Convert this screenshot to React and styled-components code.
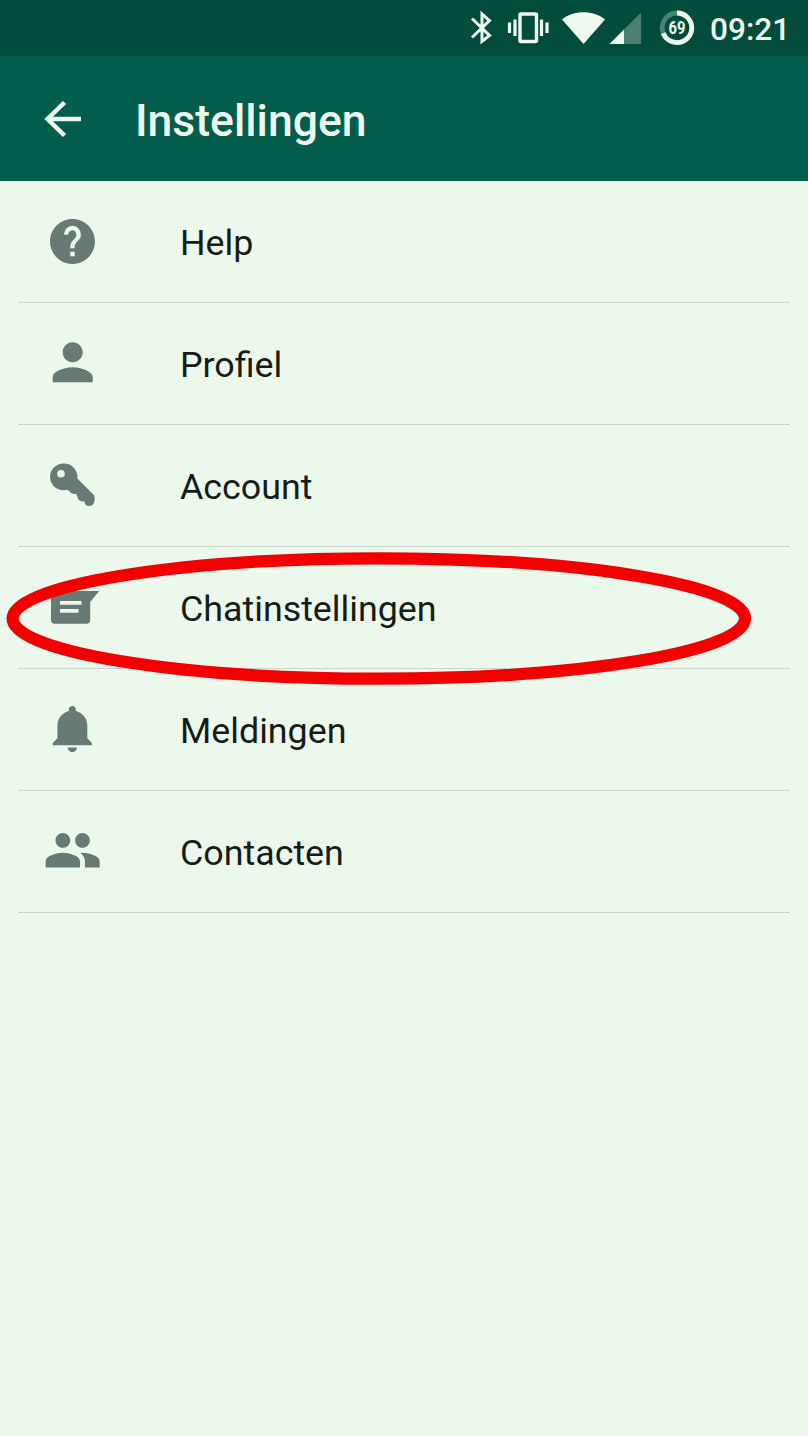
import styled, { createGlobalStyle } from "styled-components";

const GlobalStyle = createGlobalStyle`
  body{
    margin:0;
    background:#edf8ed;
    font-family:Roboto, "Noto Sans", sans-serif;
  }
`

const Screen = styled.div`
  display:flex;
  flex-direction:column;
  min-height:1436px;
  background:#edf8ed;
`

const StatusBar = styled.div`
  display:flex;
  align-items:flex-start;
  justify-content:flex-end;
  height:56px;
  padding-right:20px;
  box-sizing:border-box;
  background:#024c3c;
  color:#edf9ee;
`

const StatusIcons = styled.svg`
  width:240px;
  height:56px;
  flex:none;
`

const BatteryText = styled.text`
  font-size:17.5px;
  font-weight:700;
  fill:#edf9ee;
`

const Clock = styled.span`
  width:78px;
  margin:11px 0 0 10px;
  font-size:31.6px;
  line-height:38px;
  font-weight:500;
  white-space:nowrap;
`

const AppBar = styled.div`
  display:flex;
  align-items:center;
  height:125px;
  padding-left:36px;
  background:#025d4b;
  color:#edf9ee;
`

const BackIcon = styled.svg`
  width:54px;
  height:54px;
  margin-right:45px;
`

const Title = styled.h1`
  margin:4px 0 0;
  font-size:44.5px;
  line-height:54px;
  font-weight:500;
`

const List = styled.div`
  display:flex;
  flex-direction:column;
  padding:0 18px;
`

const Item = styled.div`
  position:relative;
  display:flex;
  align-items:center;
  height:122px;
  box-sizing:border-box;
  border-bottom:1.5px solid #cbd6cc;
`

const ItemIcon = styled.svg`
  width:60px;
  height:60px;
  margin-left:24px;
  margin-right:78px;
  fill:#697973;
  flex:none;
`

const ItemLabel = styled.span`
  font-size:35.8px;
  line-height:44px;
  color:#161d18;
  margin-top:2px;
`

const Highlight = styled.svg`
  position:absolute;
  left:-12px;
  top:4px;
  width:746px;
  height:136px;
  z-index:1;
  pointer-events:none;
`

const items = [
    {
        label: "Help",
        icon: <path transform="translate(3.5 2.5) scale(2.25)" d="M12 2C6.48 2 2 6.48 2 12s4.48 10 10 10 10-4.48 10-10S17.52 2 12 2zm1 16.5h-2v-2h2v2zm1.900-7.400l-.8.9C13.300 12.850 12.900 13.400 12.900 15h-1.900v-.5c0-1.100.4-2.100 1.100-2.830l1.100-1.260c.35-.36.55-.86.55-1.410 0-1.100-.8-2-1.800-2s-1.800.9-1.800 2H8.300c0-2.210 1.650-4 3.700-4s3.700 1.790 3.700 4c0 .88-.3 1.600-.8 2.100z"/>,
    },
    {
        label: "Profiel",
        icon: <path transform="translate(0.7 -1.8) scale(2.5)" d="M12 12c2.21 0 4-1.79 4-4s-1.79-4-4-4-4 1.79-4 4 1.79 4 4 4zm0 2c-2.67 0-8 1.34-8 4v2h16v-2c0-2.66-5.33-4-8-4z"/>,
    },
    {
        label: "Account",
        icon: <path fillRule="evenodd" d="M22 7.4A13.4 13.4 0 0 1 35.3 22.500L51.300 38.600C53 40.500 53 43.500 52.200 46C51.300 49 49.500 50 47 50C44 50 42.600 48.500 42.500 45.300C39 45.800 35.800 44.500 35.500 41L34 37.800C31 38.500 28.800 37.500 27.800 35.500L25 33.700A13.4 13.4 0 1 1 22 7.4zM19 14a3.800 3.800 0 1 0 0 7.600 3.800 3.800 0 0 0 0-7.600z"/>,
    },
    {
        label: "Chatinstellingen",
        marked: true,
        icon: <path fillRule="evenodd" d="M12.5 13H57.3L48.2 24V42a3.7 3.7 0 0 1-3.7 3.7H12.7A3.7 3.7 0 0 1 9 42V16.500a3.500 3.500 0 0 1 3.500-3.500zM18 23v3.800h21.500V23zM18 31v3.800h18.500V31z"/>,
    },
    {
        label: "Meldingen",
        icon: <path transform="translate(3.9 1.5) scale(2.3)" d="M11.5 22c1.1 0 2-.9 2-2h-4c0 1.1.9 2 2 2zm6.5-6v-5.5c0-3.07-2.13-5.64-5-6.32V3.5c0-.83-.67-1.5-1.5-1.5S10 2.67 10 3.5v.68c-2.87.68-5 3.25-5 6.32V16l-2 2v1h17v-1l-2-2z"/>,
    },
    {
        label: "Contacten",
        icon: <path transform="translate(1.2 -1.2) scale(2.455)" d="M16 11c1.66 0 3-1.34 3-3s-1.34-3-3-3-3 1.34-3 3 1.34 3 3 3zm-8 0c1.66 0 3-1.34 3-3S9.66 5 8 5 5 6.34 5 8s1.34 3 3 3zm0 2c-2.33 0-7 1.17-7 3.5V19h14v-2.5c0-2.33-4.67-3.5-7-3.5zm8 0c-.29 0-.62.02-.97.05C16.19 13.89 17 15.02 17 16.5V19h6v-2.5c0-2.33-4.67-3.5-7-3.5z"/>,
    },
];

const StatusIconRow = () => {
    return <StatusIcons viewBox="460 0 240 56">
        {/* bluetooth */}
        <path d="M472 18.5L489.5 35.5L482 41.5V14L489.5 20.5L472 37.5" fill="none" stroke="#edf9ee" strokeWidth="3"/>
        {/* vibrate */}
        <rect x="520" y="14" width="16.5" height="27.5" rx="1" fill="none" stroke="#edf9ee" strokeWidth="3.4"/>
        <path d="M509.5 22.5V33M515 19.5V36M541.5 19.5V36M547 22.5V33" stroke="#edf9ee" strokeWidth="3.2"/>
        {/* wifi */}
        <path d="M583.5 44L562 19.5C568 14.5 575.5 12.3 583.5 12.3S599 14.5 605 19.5z" fill="#edf9ee"/>
        {/* signal */}
        <path d="M609.5 44L641 12.5V44z" fill="#4c8073"/>
        <path d="M609.5 44L624 29.5V44z" fill="#edf9ee"/>
        {/* battery */}
        <circle cx="677" cy="27.8" r="14.8" fill="none" stroke="#4c8073" strokeWidth="4.8"/>
        <circle cx="677" cy="27.8" r="14.8" fill="none" stroke="#edf9ee" strokeWidth="4.8" pathLength="100" strokeDasharray="69 31" transform="rotate(-90 677 27.8)"/>
        <BatteryText x="677" y="34" textAnchor="middle" textLength="17" lengthAdjust="spacingAndGlyphs">69</BatteryText>
    </StatusIcons>;
}

const SettingsItem = (props) => {
    const { item } = props;
    return <Item>
        <ItemIcon viewBox="0 0 60 60">{item.icon}</ItemIcon>
        <ItemLabel>{item.label}</ItemLabel>
        {item.marked && <Highlight viewBox="6 551 746 136">
            <ellipse cx="378.8" cy="618.5" rx="366.2" ry="60.2" fill="none" stroke="#f20000" strokeWidth="12.2"/>
        </Highlight>}
    </Item>;
}

const App = () => {
    return <Screen>
        <GlobalStyle/>
        <StatusBar>
            <StatusIconRow/>
            <Clock>09:21</Clock>
        </StatusBar>
        <AppBar>
            <BackIcon viewBox="0 0 54 54">
                <path d="M45 27H12M28.5 10.5L11.5 27L28.5 43.5" fill="none" stroke="#edf9ee" strokeWidth="4.5"/>
            </BackIcon>
            <Title>Instellingen</Title>
        </AppBar>
        <List>
            {items.map((item) => <SettingsItem item={item} key={item.label}/>)}
        </List>
    </Screen>;
}
export default App;
